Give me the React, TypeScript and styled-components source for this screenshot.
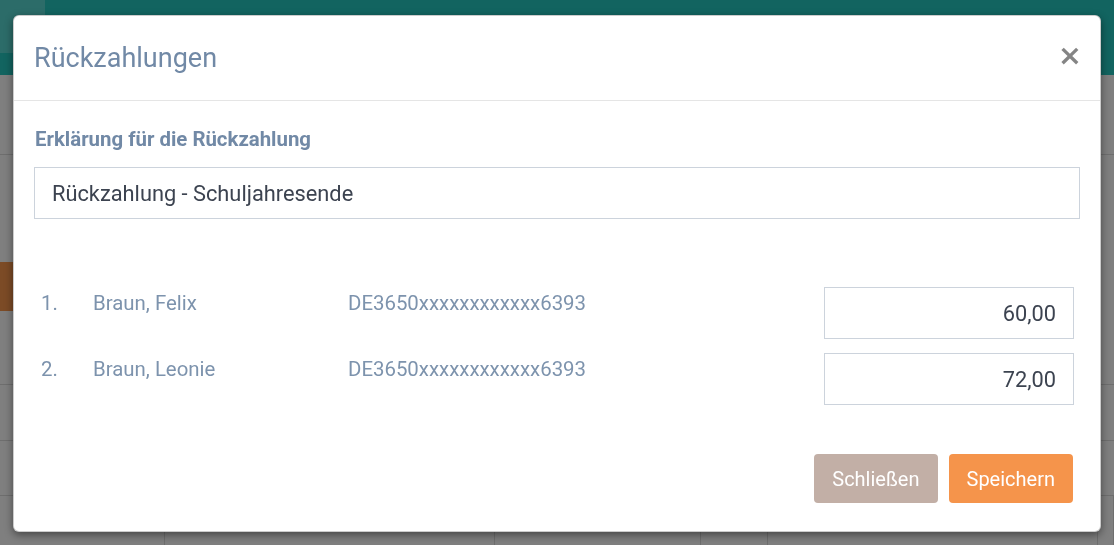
import React from "react";
import styled, { createGlobalStyle } from "styled-components";

const GlobalStyle = createGlobalStyle`
  html, body { margin: 0; padding: 0; }
  body {
    font-family: Roboto, "Liberation Sans", sans-serif;
    background: #ffffff;
    width: 1114px;
    height: 545px;
    overflow: hidden;
  }
  * { box-sizing: border-box; }
`;

/* ---------- background page ---------- */
const Page = styled.div`
  position: relative;
  width: 1114px;
  height: 545px;
  overflow: hidden;
  background: #ffffff;
`;

const TopBar = styled.header`
  height: 75px;
  background: #24c8c0;
  display: flex;
  align-items: flex-start;
`;

const BrandTile = styled.div`
  width: 45px;
  height: 53px;
  background: #58d8d2;
`;

const Band = styled.div<{ $h: number }>`
  height: ${(p) => p.$h}px;
  border-bottom: 1px solid #dcdcdc;
  display: flex;
  flex-direction: column;
`;

const ActionButton = styled.div`
  margin-top: 107px;
  width: 120px;
  height: 49px;
  background: #f8964c;
`;

const TableRow = styled.div`
  display: grid;
  grid-template-columns: 165px 330px 206px 67px 330px 1fr;
  height: 60px;
`;

const Cell = styled.div`
  border-right: 1px solid #dcdcdc;
`;

/* ---------- modal ---------- */
const Backdrop = styled.div`
  position: fixed;
  inset: 0;
  background: rgba(0, 0, 0, 0.5);
`;

const Dialog = styled.div`
  position: absolute;
  top: 15px;
  left: 13px;
  width: 1088px;
  background: #ffffff;
  border: 1px solid rgba(0, 0, 0, 0.2);
  border-radius: 6px;
  box-shadow: 0 3px 9px rgba(0, 0, 0, 0.45);
  display: flex;
  flex-direction: column;
`;

const Header = styled.div`
  display: flex;
  align-items: center;
  justify-content: space-between;
  padding: 22px 18px 22px 20px;
  border-bottom: 1px solid #e5e5e5;
`;

const Title = styled.h4`
  margin: 0;
  font-size: 27px;
  font-weight: 400;
  line-height: 40px;
  color: #7189a6;
`;

const CloseButton = styled.button`
  border: 0;
  background: transparent;
  padding: 0;
  margin-top: -5px;
  font-family: "DejaVu Sans", Roboto, sans-serif;
  font-size: 29px;
  font-weight: 700;
  line-height: 1;
  color: #000;
  opacity: 0.48;
  cursor: pointer;
`;

const Body = styled.div`
  padding: 24px 20px 0 20px;
  display: flex;
  flex-direction: column;
`;

const FieldLabel = styled.label`
  font-size: 20.4px;
  font-weight: 700;
  line-height: 28px;
  color: #7189a6;
  margin: 0 0 14px 1px;
`;

const TextInput = styled.input`
  height: 52px;
  width: 100%;
  border: 1px solid #ccd3dc;
  border-radius: 0;
  padding: 0 17px;
  font-family: Roboto, "Liberation Sans", sans-serif;
  font-size: 21.8px;
  color: #3c4350;
  outline: none;
`;

const List = styled.div`
  margin-top: 68px;
  display: flex;
  flex-direction: column;
  gap: 14px;
`;

const Row = styled.div`
  display: grid;
  grid-template-columns: 52px 255px 1fr 250px;
  align-items: start;
  padding: 0 6px 0 7px;
`;

const RowText = styled.span`
  font-size: 20.4px;
  line-height: 28px;
  padding-top: 2px;
  color: #7d93ad;
`;

const AmountInput = styled(TextInput)`
  text-align: right;
  padding: 0 17px;
`;

const Footer = styled.div`
  display: flex;
  justify-content: flex-end;
  gap: 11px;
  padding: 49px 27px 28px 20px;
`;

const Button = styled.button<{ $variant: "secondary" | "primary" }>`
  height: 49px;
  padding: 0 18px;
  border: 0;
  border-radius: 4px;
  font-family: Roboto, "Liberation Sans", sans-serif;
  font-size: 20px;
  color: #ffffff;
  background: ${(p) => (p.$variant === "primary" ? "#f5944b" : "#c2afa6")};
  cursor: pointer;
`;

const rows = [
  { name: "Braun, Felix", iban: "DE3650xxxxxxxxxxxx6393", amount: "60,00" },
  { name: "Braun, Leonie", iban: "DE3650xxxxxxxxxxxx6393", amount: "72,00" },
];

export default function App() {
  return (
    <>
      <GlobalStyle />
      <Page>
        <TopBar>
          <BrandTile />
        </TopBar>
        <Band $h={80} />
        <Band $h={230}>
          <ActionButton />
        </Band>
        <Band $h={56} />
        <Band $h={55} />
        <TableRow>
          <Cell />
          <Cell />
          <Cell />
          <Cell />
          <Cell />
          <Cell />
        </TableRow>
        <Backdrop />
        <Dialog role="dialog">
          <Header>
            <Title>Rückzahlungen</Title>
            <CloseButton aria-label="Schließen">×</CloseButton>
          </Header>
          <Body>
            <FieldLabel>Erklärung für die Rückzahlung</FieldLabel>
            <TextInput defaultValue="Rückzahlung - Schuljahresende" />
            <List>
              {rows.map((r, i) => (
                <Row key={i}>
                  <RowText>{i + 1}.</RowText>
                  <RowText>{r.name}</RowText>
                  <RowText>{r.iban}</RowText>
                  <AmountInput defaultValue={r.amount} />
                </Row>
              ))}
            </List>
          </Body>
          <Footer>
            <Button $variant="secondary">Schließen</Button>
            <Button $variant="primary">Speichern</Button>
          </Footer>
        </Dialog>
      </Page>
    </>
  );
}
